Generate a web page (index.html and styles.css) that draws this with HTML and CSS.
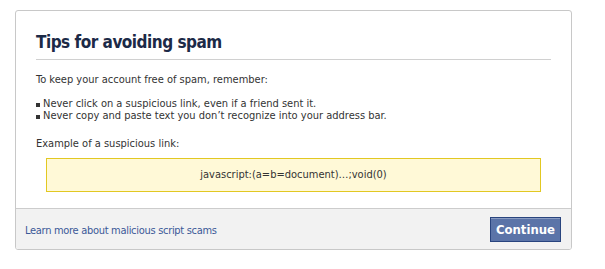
FILE: index.html
```html
<!DOCTYPE html>
<html>
<head>
<meta charset="utf-8">
<link rel="stylesheet" href="styles.css">
</head>
<body>
<div class="dialog">
  <div class="content">
    <h2 class="title">Tips for avoiding spam</h2>
    <p class="intro">To keep your account free of spam, remember:</p>
    <ul class="tips">
      <li>Never click on a suspicious link, even if a friend sent it.</li>
      <li>Never copy and paste text you don’t recognize into your address bar.</li>
    </ul>
    <p class="example-label">Example of a suspicious link:</p>
    <div class="example">javascript:(a=b=document)…;void(0)</div>
  </div>
  <div class="footer">
    <a class="learn" href="#">Learn more about malicious script scams</a>
    <button class="continue">Continue</button>
  </div>
</div>
</body>
</html>
```
FILE: styles.css
```css
html, body {
  margin: 0;
  padding: 0;
  background: #fff;
}
body {
  font-family: "DejaVu Sans Condensed", "DejaVu Sans", sans-serif;
  font-stretch: condensed;
  font-size: 11px;
  color: #333;
}
.dialog {
  margin: 10px 0 0 15px;
  width: 557px;
  height: 240px;
  box-sizing: border-box;
  border: 1px solid #c8c8c8;
  border-radius: 3px;
  display: flex;
  flex-direction: column;
  overflow: hidden;
}
.content {
  padding: 20px 20px 16px 20px;
}
.title {
  margin: 0;
  font-size: 17px;
  letter-spacing: -0.5px;
  line-height: 22px;
  font-weight: bold;
  color: #1c2a47;
  padding-bottom: 6px;
  border-bottom: 1px solid #d0d0d0;
}
.intro {
  margin: 13px 0 0 0;
  line-height: 13px;
}
.tips {
  list-style: none;
  margin: 12px 0 0 0;
  padding: 0;
  line-height: 12px;
}
.tips li::before {
  content: "";
  display: inline-block;
  vertical-align: baseline;
  width: 4px;
  height: 4px;
  background: #333;
  margin-right: 3px;
}
.example-label {
  margin: 15px 0 0 0;
  line-height: 13px;
}
.example {
  margin: 8px 10px 0 10px;
  background: #fff9d7;
  border: 1px solid #e2c822;
  text-align: center;
  padding: 10px 0;
  line-height: 12px;
  color: #333;
}
.footer {
  flex: 1;
  background: #f2f2f2;
  border-top: 1px solid #cccccc;
  display: flex;
  justify-content: space-between;
  align-items: flex-start;
  padding: 8px 10px 0 9px;
}
.learn {
  color: #3b5998;
  text-decoration: none;
  margin-top: 7px;
  line-height: 13px;
  letter-spacing: -0.3px;
}
.continue {
  font-family: "DejaVu Sans Condensed", "DejaVu Sans", sans-serif;
  font-stretch: condensed;
  font-weight: bold;
  font-size: 13px;
  color: #fff;
  background: #5b74a8;
  border: 1px solid #29447e;
  box-shadow: inset 0 1px 0 #8a9cc2;
  height: 25px;
  width: 71px;
  padding: 0;
  line-height: 22px;
}
```
